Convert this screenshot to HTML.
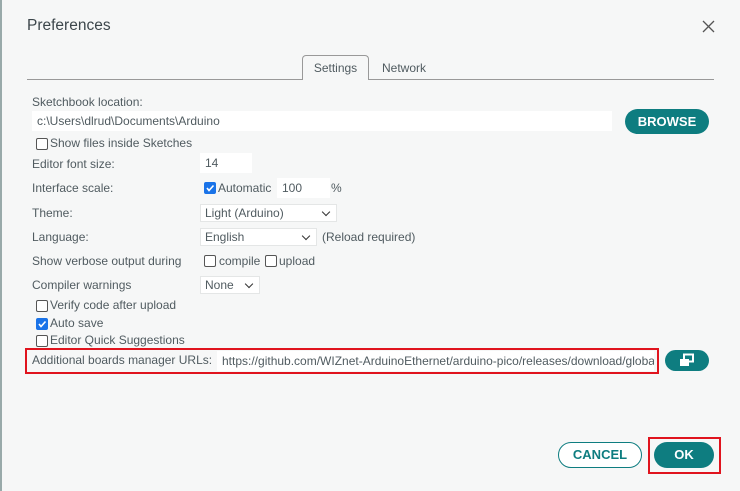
<!DOCTYPE html>
<html><head><style>
body{margin:0;width:740px;height:491px;background:#f6f7f7;font-family:"Liberation Sans",sans-serif;font-size:12px;color:#505b60;position:relative;overflow:hidden}
.a{position:absolute;white-space:nowrap}
.inp{position:absolute;background:#fff;height:20px;line-height:20px;padding-left:5px;box-sizing:border-box;overflow:hidden;white-space:nowrap}
.cb{position:absolute;width:10px;height:10px;border:1px solid #555;border-radius:2px;background:#fff}
.cb.on{background:#1a73e8;border-color:#1a73e8}
.sel{position:absolute;background:#fff;height:18px;line-height:17px;padding-left:4px;box-sizing:border-box;border:1px solid #e4e6e6}
.sel:after{content:"";position:absolute;right:7px;top:4px;width:5px;height:5px;border-right:1.5px solid #333;border-bottom:1.5px solid #333;transform:rotate(45deg)}
.btn{position:absolute;background:#0e7d80;color:#fff;font-weight:bold;border-radius:13px;text-align:center;font-size:13px}
</style></head><body>
<div class="a" style="left:0;top:0;width:2px;height:491px;background:#9aa"></div>
<div class="a" style="left:27px;top:17px;font-size:15.5px;color:#3c464b">Preferences</div>
<svg class="a" style="left:702px;top:20px" width="13" height="13"><path d="M1 1L12 12M12 1L1 12" stroke="#555" stroke-width="1.3"/></svg>
<div class="a" style="left:27px;top:79px;width:687px;height:1px;background:#999"></div>
<div class="a" style="left:302px;top:55px;width:67px;height:25px;border:1px solid #999;border-bottom:none;border-radius:4px 4px 0 0;background:#f6f7f7;box-sizing:border-box;text-align:center;line-height:25px">Settings</div>
<div class="a" style="left:382px;top:61px">Network</div>
<div class="a" style="left:32px;top:95px">Sketchbook location:</div>
<div class="inp" style="left:32px;top:111px;width:580px">c:\Users\dlrud\Documents\Arduino</div>
<div class="btn" style="left:625px;top:109px;width:84px;height:25px;line-height:25px">BROWSE</div>
<div class="cb" style="left:36px;top:138px"></div><div class="a" style="left:50px;top:136px">Show files inside Sketches</div>
<div class="a" style="left:32px;top:157px">Editor font size:</div>
<div class="inp" style="left:200px;top:153px;width:52px">14</div>
<div class="a" style="left:32px;top:181px">Interface scale:</div>
<div class="cb on" style="left:204px;top:182px"></div><svg class="a" style="left:205px;top:183px" width="10" height="10"><path d="M2 5L4 7.5L8.5 2.5" stroke="#fff" stroke-width="1.6" fill="none"/></svg>
<div class="a" style="left:218px;top:181px">Automatic</div>
<div class="inp" style="left:277px;top:178px;width:53px">100</div>
<div class="a" style="left:331px;top:181px">%</div>
<div class="a" style="left:32px;top:206px">Theme:</div>
<div class="sel" style="left:200px;top:204px;width:137px">Light (Arduino)</div>
<div class="a" style="left:32px;top:230px">Language:</div>
<div class="sel" style="left:200px;top:228px;width:117px">English</div>
<div class="a" style="left:322px;top:230px">(Reload required)</div>
<div class="a" style="left:32px;top:254px">Show verbose output during</div>
<div class="cb" style="left:204px;top:255px"></div><div class="a" style="left:219px;top:254px">compile</div>
<div class="cb" style="left:265px;top:255px"></div><div class="a" style="left:279px;top:254px">upload</div>
<div class="a" style="left:32px;top:278px">Compiler warnings</div>
<div class="sel" style="left:200px;top:276px;width:60px">None</div>
<div class="cb" style="left:36px;top:300px"></div><div class="a" style="left:50px;top:298px">Verify code after upload</div>
<div class="cb on" style="left:36px;top:318px"></div><svg class="a" style="left:37px;top:319px" width="10" height="10"><path d="M2 5L4 7.5L8.5 2.5" stroke="#fff" stroke-width="1.6" fill="none"/></svg>
<div class="a" style="left:50px;top:316px">Auto save</div>
<div class="cb" style="left:36px;top:335px"></div><div class="a" style="left:50px;top:333px">Editor Quick Suggestions</div>
<div class="a" style="left:25px;top:348px;width:634px;height:26px;border:2px solid #e0141e;box-sizing:border-box"></div>
<div class="a" style="left:32px;top:353px">Additional boards manager URLs:</div>
<div class="inp" style="left:217px;top:351px;width:437px">https://github.com/WIZnet-ArduinoEthernet/arduino-pico/releases/download/global/package_rp2040-ethernet_index.json</div>
<div class="btn" style="left:665px;top:350px;width:44px;height:21px"></div>
<svg class="a" style="left:678px;top:353px" width="18" height="15"><rect x="6" y="1.5" width="9" height="7" fill="none" stroke="#fff" stroke-width="2"/><rect x="2" y="6" width="9" height="7" fill="#fff"/></svg>
<div class="btn" style="left:558px;top:442px;width:84px;height:26px;line-height:24px;background:#fff;color:#0e7d80;border:1.5px solid #0e7d80;box-sizing:border-box">CANCEL</div>
<div class="a" style="left:648px;top:437px;width:73px;height:37px;border:2px solid #e0141e;box-sizing:border-box"></div>
<div class="btn" style="left:654px;top:442px;width:60px;height:26px;line-height:26px">OK</div>
</body></html>
